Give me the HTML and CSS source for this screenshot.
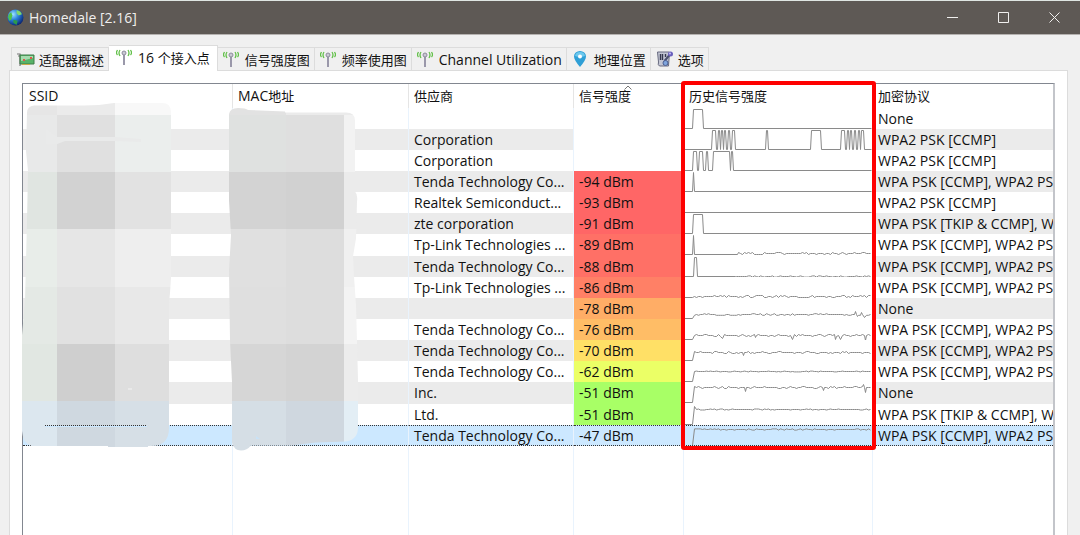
FILE: index.html
```
<!DOCTYPE html>
<html lang="zh-CN">
<head>
    <meta charset="UTF-8">
    <title>Homedale [2.16]</title>
    <link rel="stylesheet" href="styles.css">
</head>
<body>
    <!-- shared icon for the signal tabs -->
    <svg class="defs" aria-hidden="true">
        <symbol id="antenna" viewBox="0 0 16 16">
            <path d="M7 6h2v10H7z" fill="#9a98aa"/>
            <circle cx="8" cy="4" r="2" fill="#c9c9d3" stroke="#8d8b9c"/>
            <path d="M4 1q-2 3 0 6M12 1q2 3 0 6M1.500 1q-2 3 0 5M14.500 1q2 3 0 5" fill="none" stroke="#63c04a" stroke-width="1.300"/>
        </symbol>
    </svg>

    <header class="titlebar">
        <svg class="globe" viewBox="0 0 16 16">
            <defs>
                <radialGradient id="sea" cx="35%" cy="30%" r="75%">
                    <stop offset="0" stop-color="#9fe4ff"/>
                    <stop offset="0.450" stop-color="#2b83dc"/>
                    <stop offset="1" stop-color="#0a2370"/>
                </radialGradient>
            </defs>
            <circle cx="8" cy="8" r="7.500" fill="url(#sea)"/>
            <path d="M1 7q1-3 3-4l1 3-1 4-2 1z" fill="#4fc24a"/>
            <path d="M9 1q4 1 5 4l-3 1-2-2z" fill="#7fd66a"/>
            <path d="M6 10l4 1-1 4-3-2z" fill="#2c9b4a"/>
        </svg>
        <h1>Homedale [2.16]</h1>
        <div class="window-buttons">
            <button type="button" aria-label="Minimize"><svg viewBox="0 0 12 12"><path d="M0 5.500h11"/></svg></button>
            <button type="button" aria-label="Maximize"><svg viewBox="0 0 12 12"><path d="M.5.5h10v10H.5z"/></svg></button>
            <button type="button" aria-label="Close"><svg viewBox="0 0 12 12"><path d="M.5.5l10 10M10.500.5l-10 10"/></svg></button>
        </div>
    </header>

    <nav class="tabs">
        <button type="button" class="tab">
            <svg class="wide" viewBox="0 0 18 16">
                <path d="M0 3h3v12M1 5h2" fill="none" stroke="#777" stroke-width="1.200"/>
                <path d="M3 4h14v9H3z" fill="#58b368" stroke="#3f7d49"/>
                <path d="M4 5h12v2L4 10z" fill="#a6dcae"/>
                <path d="M6 8h2v2H6zM13 6h2v2h-2z" fill="#d95b4c"/>
                <path d="M5 13h8v1H5z" fill="#c8a94a"/>
            </svg>
            适配器概述
        </button>
        <button type="button" class="tab active"><svg><use href="#antenna"/></svg><span class="latin">16 </span>个接入点</button>
        <button type="button" class="tab"><svg><use href="#antenna"/></svg>信号强度图</button>
        <button type="button" class="tab"><svg><use href="#antenna"/></svg>频率使用图</button>
        <button type="button" class="tab"><svg><use href="#antenna"/></svg><span class="latin">Channel Utilization</span></button>
        <button type="button" class="tab">
            <svg viewBox="0 0 16 16">
                <path d="M8 16Q2 9 2 5.500a6 5.500 0 0 1 12 0Q14 9 8 16z" fill="#2f9fd6"/>
                <path d="M8 1a5 4.500 0 0 0-5 4q5 2 10 0a5 4.500 0 0 0-5-4z" fill="#6cc8ee"/>
                <circle cx="8" cy="5.500" r="2" fill="#fff"/>
            </svg>
            地理位置
        </button>
        <button type="button" class="tab">
            <svg class="wide" viewBox="0 0 17 16">
                <path d="M1 1h12l-1 14H3q-2-1-1-4z" fill="#c3c6d4" stroke="#686b80"/>
                <path d="M4 3v6M6 3v6M9 3v3" fill="none" stroke="#34374d" stroke-width="1.400"/>
                <path d="M13 4L8 10" stroke="#4b4f6e" stroke-width="2"/>
                <circle cx="14" cy="3" r="2.500" fill="#6a60bd"/>
                <circle cx="13.500" cy="2.500" r="1" fill="#c5bff0"/>
                <circle cx="9" cy="12" r="2.500" fill="#7fa5dd" stroke="#4b5f93"/>
            </svg>
            选项
        </button>
    </nav>

    <main class="panel">
        <div class="list">
            <table>
                <colgroup>
                    <col class="col-ssid">
                    <col class="col-mac">
                    <col class="col-vendor">
                    <col class="col-signal">
                    <col class="col-history">
                    <col>
                </colgroup>
                <thead>
                    <tr>
                        <th><span class="latin">SSID</span></th>
                        <th><span class="latin">MAC</span>地址</th>
                        <th>供应商</th>
                        <th class="sorted">信号强度<svg class="sort" viewBox="0 0 8 5"><path d="M.5 4.500L4 1l3.500 3.500"/></svg></th>
                        <th>历史信号强度</th>
                        <th>加密协议</th>
                    </tr>
                </thead>
                <tbody id="rows"></tbody>
            </table>

            <!-- brushed-out SSID and MAC values -->
            <svg class="redaction" viewBox="22 83 350 380" aria-hidden="true">
                <defs>
                    <clipPath id="brush-ssid">
                        <path d="M27 113q0-7 7-7.500l50 0q15 0 30-2.500h48q9 0 9 9v166l-1 15-1 10v125q0 18-18 18h-3v1h-40v-1H32q-9-2-10-15v-96l3-34 1-40 1-40 1-50-2-20z"/>
                    </clipPath>
                    <clipPath id="brush-mac">
                        <path d="M229 114q1-6 9-6 8 0 10 2l37 1.500v1h61q9 0 9 8v71q3 3 2 10l-1 37-3 18 1 20 2 28 2 75v48q0 12-12 14l-30 1-25 3h-40q-4 5-10 5-7 0-9-8v-60l-2-42-1-70 2-35-2-35z"/>
                    </clipPath>
                </defs>
                <g clip-path="url(#brush-ssid)">
                    <path fill="#e6e6e6" d="M22 100h35v15H22z"/><path fill="#ebebeb" d="M57 100h58v15H57z"/><path fill="#f8f8f8" d="M115 100h58v15h-58z"/>
                    <path fill="#e8e9e9" d="M22 115h35v57H22z"/><path fill="#e0e0e0" d="M57 115h58v57H57z"/><path fill="#ebeeed" d="M115 115h58v57h-58z"/>
                    <path fill="#e0e5e1" d="M22 172h35v57H22z"/><path fill="#d2d2d2" d="M57 172h58v57H57z"/><path fill="#e2e2e2" d="M115 172h58v57h-58z"/>
                    <path fill="#e8ede9" d="M22 229h35v58H22z"/><path fill="#e6e6e6" d="M57 229h58v58H57z"/><path fill="#eeeeee" d="M115 229h58v58h-58z"/>
                    <path fill="#e4e9e5" d="M22 287h35v57H22z"/><path fill="#e1e1e1" d="M57 287h58v57H57z"/><path fill="#e8e8e8" d="M115 287h58v57h-58z"/>
                    <path fill="#e1e7e2" d="M22 344h35v57H22z"/><path fill="#cfcfcf" d="M57 344h58v57H57z"/><path fill="#dedede" d="M115 344h58v57h-58z"/>
                    <path fill="#dce7ef" d="M22 401h35v47H22z"/><path fill="#cfd8e0" d="M57 401h58v47H57z"/><path fill="#d6dfe6" d="M115 401h58v47h-58z"/>
                    <path fill="#e9eaea" d="M46 129l11 8h58l26 2v3l-26-1H65l-8 3-11 1z"/>
                    <path d="M128 389h4" stroke="#f4f4f4"/>
                </g>
                <path d="M45 426.500h102" stroke="#cce8ff"/>
                <path d="M45 425.500h102" stroke="#333" stroke-dasharray="1 1"/>
                <g clip-path="url(#brush-mac)">
                    <path fill="#e2e2e2" d="M228 106h58v9h-58z"/><path fill="#ebebeb" d="M286 106h73v9h-73z"/>
                    <path fill="#dfe1e0" d="M228 115h58v57h-58z"/><path fill="#dfdfdf" d="M286 115h58v57h-58z"/><path fill="#f2f2f2" d="M344 115h16v57h-16z"/>
                    <path fill="#d3d3d3" d="M228 172h58v57h-58z"/><path fill="#d1d1d1" d="M286 172h58v57h-58z"/><path fill="#ebebeb" d="M344 172h16v57h-16z"/>
                    <path fill="#e0e0e0" d="M228 229h58v58h-58z"/><path fill="#dddddd" d="M286 229h58v58h-58z"/><path fill="#f0f0f0" d="M344 229h16v58h-16z"/>
                    <path fill="#dfdfdf" d="M228 287h58v57h-58z"/><path fill="#dddddd" d="M286 287h58v57h-58z"/><path fill="#f3f3f3" d="M344 287h16v57h-16z"/>
                    <path fill="#d6d6d6" d="M228 344h58v57h-58z"/><path fill="#d3d3d3" d="M286 344h58v57h-58z"/><path fill="#ececec" d="M344 344h16v57h-16z"/>
                    <path fill="#d5dee5" d="M228 401h58v54h-58z"/><path fill="#cfd7df" d="M286 401h58v54h-58z"/><path fill="#e3eef5" d="M344 401h16v54h-16z"/>
                    <path fill="#c8e2f7" d="M256 436l4 3h-4z"/>
                </g>
            </svg>

            <div class="highlight"></div>
        </div>
    </main>

    <script src="script.js"></script>
</body>
</html>
```
FILE: styles.css
```
* {
    box-sizing: border-box;
}

body {
    display: flex;
    flex-direction: column;
    height: 100vh;
    margin: 0;
    overflow: hidden;
    background-color: #f0f0f0;
    color: #111;
    font-family: "Open Sans", "Noto Sans CJK SC", sans-serif;
    font-size: 13px;
}

button {
    border: none;
    background: none;
    color: inherit;
    font: inherit;
}

.defs {
    position: absolute;
    width: 0;
    height: 0;
}

.latin {
    font-size: 14px;
    white-space: pre;
}

/* Title bar */
.titlebar {
    display: flex;
    flex: none;
    align-items: center;
    height: 35px;
    padding-left: 7px;
    border-top: 1px solid #dfe6e2;
    border-bottom: 1px solid #b5b2b0;
    background-color: #5e5955;
    color: #f0efee;
}

.globe {
    width: 17px;
    height: 17px;
    margin-right: 5px;
}

h1 {
    flex: 1;
    margin: 0;
    font-size: 14px;
    font-weight: normal;
}

.window-buttons {
    display: flex;
}

.window-buttons button {
    display: flex;
    align-items: center;
    justify-content: center;
    width: 51px;
    height: 33px;
    padding: 0;
}

.window-buttons svg {
    width: 12px;
    height: 12px;
    fill: none;
    stroke: #f0efee;
}

/* Tabs */
.tabs {
    display: flex;
    flex: none;
    align-items: flex-end;
    height: 35px;
    padding-left: 11px;
}

.tab {
    display: flex;
    align-items: center;
    height: 23px;
    padding: 0 4px 0 5px;
    border: 1px solid #dcdcdc;
    border-bottom: none;
    border-left: none;
    white-space: nowrap;
}

.tab:first-child {
    border-left: 1px solid #dcdcdc;
}

.tab svg {
    width: 16px;
    height: 16px;
    margin-right: 6px;
}

.tab svg.wide {
    width: 18px;
    margin-right: 4px;
}

.tab.active {
    z-index: 1;
    height: 26px;
    margin-bottom: -1px;
    padding: 0 7px 3px;
    background-color: #fff;
}

/* Access point list */
.panel {
    display: flex;
    flex: 1;
    margin: 0 12px 0 9px;
    padding: 12px 12px 0;
    border: 1px solid #dcdcdc;
    border-bottom: none;
    background-color: #fff;
}

.list {
    position: relative;
    flex: 1;
    min-width: 0;
    border: 1px solid #828790;
    border-right: 2px solid #c3c5ca;
    border-bottom: none;
    /* column lines run below the last row */
    background: linear-gradient(#e9f3fd, #e9f3fd) 209px 0 / 1px 100% no-repeat,
        linear-gradient(#e9f3fd, #e9f3fd) 385px 0 / 1px 100% no-repeat,
        linear-gradient(#e9f3fd, #e9f3fd) 550px 0 / 1px 100% no-repeat,
        linear-gradient(#e9f3fd, #e9f3fd) 660px 0 / 1px 100% no-repeat,
        linear-gradient(#e9f3fd, #e9f3fd) 849px 0 / 1px 100% no-repeat;
}

table {
    width: 100%;
    border-collapse: separate;
    border-spacing: 0;
    table-layout: fixed;
}

.col-ssid {
    width: 210px;
}

.col-mac {
    width: 176px;
}

.col-vendor {
    width: 165px;
}

.col-signal {
    width: 110px;
}

.col-history {
    width: 189px;
}

th,
td {
    height: 21px;
    padding: 0 0 0 5px;
    overflow: hidden;
    border-right: 1px solid #e9f3fd;
    line-height: 20px;
    text-align: left;
    white-space: nowrap;
}

th:last-child,
td:last-child {
    border-right: none;
}

th {
    height: 24px;
    border-right-color: #e5e5e5;
    font-weight: normal;
}

th:first-child {
    padding-left: 6px;
}

.sorted {
    position: relative;
}

.sort {
    position: absolute;
    top: 1px;
    left: 50px;
    width: 8px;
    height: 5px;
    fill: none;
    stroke: #777;
}

td {
    font-size: 14px;
}

tbody tr:nth-child(7n) td {
    height: 22px;
}

tbody tr:nth-child(even) td {
    background-color: #ebebeb;
}

tbody td.signal,
tbody td.history {
    background-color: #fff !important;
}

.history {
    padding: 0;
}

.history svg {
    display: block;
    width: 188px;
    height: 20px;
    overflow: visible;
    fill: none;
    stroke: #8a8a8a;
}

tbody td.lv-1 { background-color: #ff6666 !important; }
tbody td.lv-2 { background-color: #ff7066 !important; }
tbody td.lv-3 { background-color: #ff8066 !important; }
tbody td.lv-4 { background-color: #ffad66 !important; }
tbody td.lv-5 { background-color: #ffbd66 !important; }
tbody td.lv-6 { background-color: #ffe066 !important; }
tbody td.lv-7 { background-color: #ebff66 !important; }
tbody td.lv-8 { background-color: #a8ff66 !important; }

tbody tr.selected td {
    border-top: 1px dotted #333;
    border-bottom: 1px dotted #333;
    background-color: #cce8ff !important;
    line-height: 19px;
}

.selected .history svg {
    height: 18px;
}

.redaction {
    position: absolute;
    top: -1px;
    left: -1px;
    width: 350px;
    height: 380px;
}

/* Red frame around the history column */
.highlight {
    position: absolute;
    top: -3px;
    left: 658px;
    width: 195px;
    height: 369px;
    border: 4px solid #fe0000;
    border-radius: 3px;
}
```
FILE: script.js
```
const TENDA = 'Tenda Technology Co...';
const WPA_MIX = 'WPA PSK [CCMP], WPA2 PSK [CCMP]';
const WPA_TKIP = 'WPA PSK [TKIP & CCMP], WPA2 PSK [TKIP & CCMP]';
const WPA2 = 'WPA2 PSK [CCMP]';

// pulses: [start, end] at full height
// level: y of the line after the first samples, noise: how far it moves, dips: [x, y]
const accessPoints = [
    { vendor: '', signal: '', security: 'None', pulses: [[9, 18]] },
    { vendor: 'Corporation', signal: '', security: WPA2, pulses: [[28, 31], [34, 35], [37, 38], [40, 41], [44, 45], [48, 50], [82, 83], [127, 136], [157, 160], [163, 164], [166, 167], [170, 171], [174, 175], [177, 179]] },
    { vendor: 'Corporation', signal: '', security: WPA2, pulses: [[9, 12], [15, 18], [22, 23], [29, 45], [47, 48]] },
    { vendor: TENDA, signal: '-94 dBm', color: 1, security: WPA_MIX, pulses: [[9, 9]] },
    { vendor: 'Realtek Semiconduct...', signal: '-93 dBm', color: 1, security: WPA2 },
    { vendor: 'zte corporation', signal: '-91 dBm', color: 1, security: WPA_TKIP, pulses: [[9, 18]] },
    { vendor: 'Tp-Link Technologies ...', signal: '-89 dBm', color: 2, security: WPA_MIX, pulses: [[9, 9]], level: 18, noise: 1, from: 54 },
    { vendor: TENDA, signal: '-88 dBm', color: 2, security: WPA_MIX, pulses: [[10, 12]], level: 19, noise: 0.6, from: 52 },
    { vendor: 'Tp-Link Technologies ...', signal: '-86 dBm', color: 3, security: WPA_MIX, level: 18, noise: 1, from: 9 },
    { vendor: '', signal: '-78 dBm', color: 4, security: 'None', level: 15, noise: 0.8, from: 9, dips: [[171, 12], [173, 17], [177, 13], [180, 18]] },
    { vendor: TENDA, signal: '-76 dBm', color: 5, security: WPA_MIX, level: 15, noise: 1, from: 9, dips: [[38, 18], [71, 17], [108, 19], [151, 19], [156, 19], [181, 20]] },
    { vendor: TENDA, signal: '-70 dBm', color: 6, security: WPA_MIX, level: 11, noise: 1, from: 9, dips: [[59, 14]] },
    { vendor: TENDA, signal: '-62 dBm', color: 7, security: WPA_MIX, level: 9, noise: 0.4, from: 9 },
    { vendor: 'Inc.', signal: '-51 dBm', color: 8, security: 'None', level: 4, noise: 1, from: 9, dips: [[61, 8], [139, 7], [179, 1], [181, 9]] },
    { vendor: 'Ltd.', signal: '-51 dBm', color: 8, security: WPA_TKIP, level: 4, noise: 0.5, from: 9, dips: [[10, 1]] },
    { vendor: TENDA, signal: '-47 dBm', security: WPA_MIX, level: 2, noise: 0.6, from: 9, selected: true }
];

const WIDTH = 187;
const BASE = 19;

function historyPoints(ap, seed) {
    const base = ap.selected ? 18 : BASE;
    const points = [[0, base]];
    (ap.pulses || []).forEach(([start, end]) => {
        points.push([start - 1, base], [start, 0], [end, 0], [end + 1, base]);
    });
    if (ap.level) {
        points.push([ap.from - 1, base]);
        let value = seed * 7919;
        const dips = new Map(ap.dips || []);
        for (let x = ap.from; x <= WIDTH; x++) {
            value = (value * 1103515245 + 12345) % 2147483648;
            if (dips.has(x)) {
                points.push([x, dips.get(x)]);
            } else if (x % 2 === 0) {
                const r = value / 2147483648;
                const step = r < 0.2 ? -1 : r > 0.8 ? 1 : 0;
                points.push([x, ap.level + step * ap.noise]);
            }
        }
    } else {
        points.push([WIDTH, base]);
    }
    return points.map(([x, y]) => (x + 0.5) + ',' + (y + 0.5)).join(' ');
}

function addCell(row, text, className) {
    const cell = row.insertCell();
    cell.textContent = text;
    if (className) {
        cell.className = className;
    }
    return cell;
}

const rows = document.getElementById('rows');

accessPoints.forEach((ap, i) => {
    const row = rows.insertRow();
    if (ap.selected) {
        row.className = 'selected';
    }
    addCell(row, '');
    addCell(row, '');
    addCell(row, ap.vendor);
    addCell(row, ap.signal, 'signal' + (ap.color ? ' lv-' + ap.color : ''));
    const history = addCell(row, '', 'history');
    history.innerHTML = '<svg><polyline points="' + historyPoints(ap, i + 1) + '"/></svg>';
    addCell(row, ap.security);
});
```
